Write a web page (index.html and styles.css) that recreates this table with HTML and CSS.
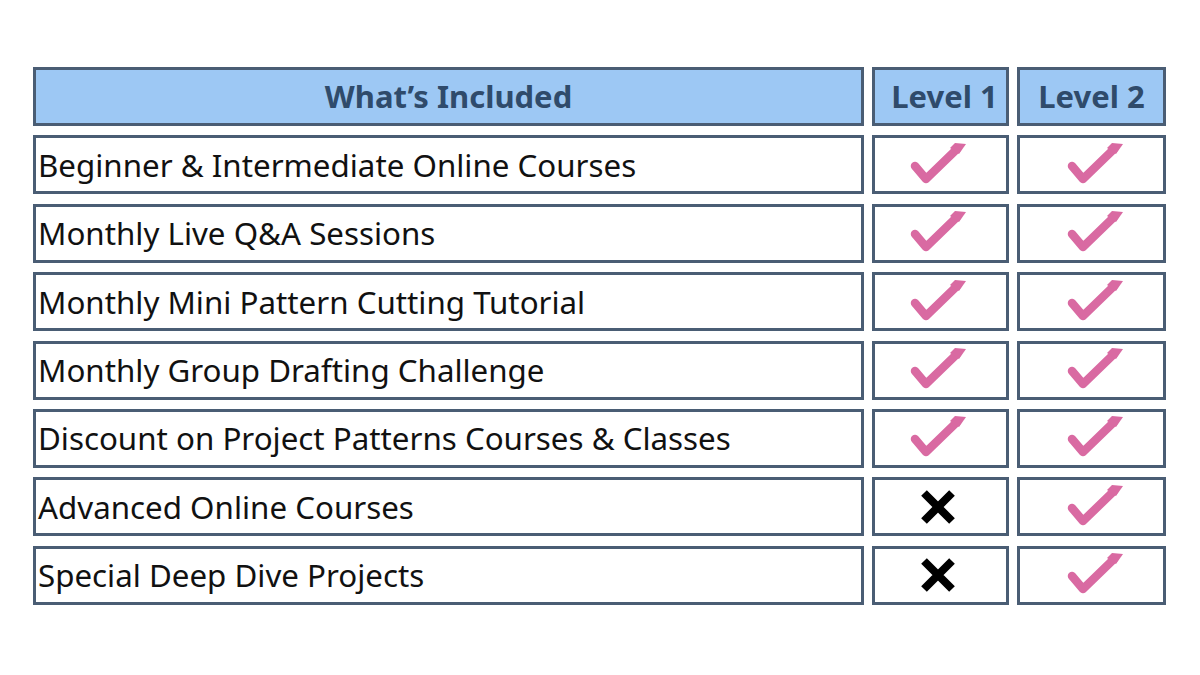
FILE: index.html
```html
<!DOCTYPE html>
<html>
<head>
<meta charset="utf-8">
<link rel="stylesheet" href="styles.css">
</head>
<body>
<div class="table">
  <div class="cell head">What’s Included</div>
  <div class="cell head h1">Level 1</div>
  <div class="cell head">Level 2</div>

  <div class="cell label">Beginner &amp; Intermediate Online Courses</div>
  <div class="cell mark l1"><svg class="check" viewBox="0 0 56 42"><path d="M5 24 L16 37 L47 7"/><path class="tip" d="M40 6 L45 1 L56 2 L49 12 Z"/></svg></div>
  <div class="cell mark l2"><svg class="check" viewBox="0 0 56 42"><path d="M5 24 L16 37 L47 7"/><path class="tip" d="M40 6 L45 1 L56 2 L49 12 Z"/></svg></div>

  <div class="cell label">Monthly Live Q&amp;A Sessions</div>
  <div class="cell mark l1"><svg class="check" viewBox="0 0 56 42"><path d="M5 24 L16 37 L47 7"/><path class="tip" d="M40 6 L45 1 L56 2 L49 12 Z"/></svg></div>
  <div class="cell mark l2"><svg class="check" viewBox="0 0 56 42"><path d="M5 24 L16 37 L47 7"/><path class="tip" d="M40 6 L45 1 L56 2 L49 12 Z"/></svg></div>

  <div class="cell label">Monthly Mini Pattern Cutting Tutorial</div>
  <div class="cell mark l1"><svg class="check" viewBox="0 0 56 42"><path d="M5 24 L16 37 L47 7"/><path class="tip" d="M40 6 L45 1 L56 2 L49 12 Z"/></svg></div>
  <div class="cell mark l2"><svg class="check" viewBox="0 0 56 42"><path d="M5 24 L16 37 L47 7"/><path class="tip" d="M40 6 L45 1 L56 2 L49 12 Z"/></svg></div>

  <div class="cell label">Monthly Group Drafting Challenge</div>
  <div class="cell mark l1"><svg class="check" viewBox="0 0 56 42"><path d="M5 24 L16 37 L47 7"/><path class="tip" d="M40 6 L45 1 L56 2 L49 12 Z"/></svg></div>
  <div class="cell mark l2"><svg class="check" viewBox="0 0 56 42"><path d="M5 24 L16 37 L47 7"/><path class="tip" d="M40 6 L45 1 L56 2 L49 12 Z"/></svg></div>

  <div class="cell label">Discount on Project Patterns Courses &amp; Classes</div>
  <div class="cell mark l1"><svg class="check" viewBox="0 0 56 42"><path d="M5 24 L16 37 L47 7"/><path class="tip" d="M40 6 L45 1 L56 2 L49 12 Z"/></svg></div>
  <div class="cell mark l2"><svg class="check" viewBox="0 0 56 42"><path d="M5 24 L16 37 L47 7"/><path class="tip" d="M40 6 L45 1 L56 2 L49 12 Z"/></svg></div>

  <div class="cell label">Advanced Online Courses</div>
  <div class="cell mark l1"><svg class="cross" viewBox="0 0 36 34"><path d="M4 3 L32 31 M32 3 L4 31"/></svg></div>
  <div class="cell mark l2"><svg class="check" viewBox="0 0 56 42"><path d="M5 24 L16 37 L47 7"/><path class="tip" d="M40 6 L45 1 L56 2 L49 12 Z"/></svg></div>

  <div class="cell label">Special Deep Dive Projects</div>
  <div class="cell mark l1"><svg class="cross" viewBox="0 0 36 34"><path d="M4 3 L32 31 M32 3 L4 31"/></svg></div>
  <div class="cell mark l2"><svg class="check" viewBox="0 0 56 42"><path d="M5 24 L16 37 L47 7"/><path class="tip" d="M40 6 L45 1 L56 2 L49 12 Z"/></svg></div>
</div>
</body>
</html>
```
FILE: styles.css
```css
html, body {
  margin: 0;
  padding: 0;
  background: #ffffff;
}
body {
  width: 1200px;
  height: 675px;
  font-family: "Noto Sans", "Open Sans", sans-serif;
  padding-top: 67px;
  padding-left: 33px;
  box-sizing: border-box;
}
.table {
  display: grid;
  grid-template-columns: 831px 137px 149px;
  grid-template-rows: repeat(8, 59px);
  column-gap: 8px;
  row-gap: 9.4px;
}
.cell {
  border: 3px solid #4a5d74;
  box-sizing: border-box;
  background: #ffffff;
  display: flex;
  align-items: center;
}
.head {
  background: #9dc8f4;
  color: #2f4b6b;
  font-weight: 700;
  font-size: 31px;
  justify-content: center;
  padding-bottom: 1px;
}
.head.h1 {
  padding-left: 8px;
}
.label {
  font-size: 31.3px;
  color: #111111;
  padding-left: 2px;
}
.mark {
  justify-content: center;
}
.mark.l1 {
  padding-right: 5px;
}
.mark.l2 {
  padding-left: 7px;
}
.check {
  width: 56px;
  height: 42px;
  margin-bottom: 4px;
  fill: none;
  stroke: #d96aa2;
  stroke-width: 8.5;
  stroke-linejoin: round;
  stroke-linecap: round;
}
.check .tip {
  fill: #d96aa2;
  stroke: none;
}
.cross {
  width: 36px;
  height: 34px;
  fill: none;
  stroke: #000000;
  stroke-width: 8;
}
```
